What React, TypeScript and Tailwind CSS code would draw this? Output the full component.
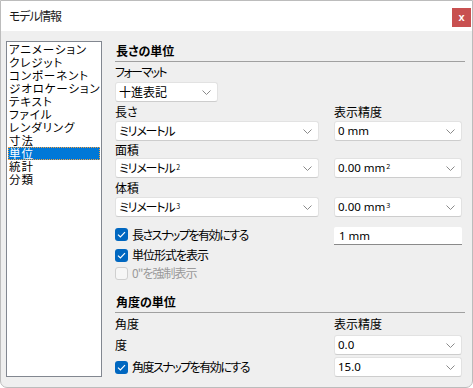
import React from "react";

const jp = "font-['Meiryo_UI','Noto_Sans_CJK_JP',sans-serif] [font-feature-settings:'palt']";
const lat = "font-['Noto_Sans',sans-serif] text-[11.5px]";

const Chevron = () => (
  <svg width="9" height="5" viewBox="0 0 9 5" className="shrink-0">
    <path d="M0.5 0.5 L4.5 4.5 L8.5 0.5" fill="none" stroke="#8a8a8a" strokeWidth="1" />
  </svg>
);

function Select({ cls, children }: { cls: string; children: React.ReactNode }) {
  return (
    <div
      className={`flex items-center justify-between h-[20px] bg-white border border-[#e2e2e2] border-b-[#cdcdcd] rounded-[3px] pl-[3px] pr-[6px] leading-none text-black ${cls}`}
    >
      <span className="whitespace-nowrap">{children}</span>
      <Chevron />
    </div>
  );
}

function Check({ checked, disabled, label, tr }: { checked?: boolean; disabled?: boolean; label: string; tr: string }) {
  return (
    <div className="flex items-center gap-[4px]">
      {checked ? (
        <div className="w-[13px] h-[13px] rounded-[3px] bg-[#0067c0] flex items-center justify-center shrink-0">
          <svg width="9" height="7" viewBox="0 0 9 7">
            <path d="M1 3.6 L3.4 6 L8 1.2" stroke="white" fill="none" strokeWidth="1.2" />
          </svg>
        </div>
      ) : (
        <div className="w-[13px] h-[13px] rounded-[3px] border border-[#cfcfcf] bg-[#f6f6f6] shrink-0" />
      )}
      <span className={`text-[12px] leading-none whitespace-nowrap ${tr} ${disabled ? "text-[#9a9a9a]" : "text-black"}`}>
        {label}
      </span>
    </div>
  );
}

const items = [
  "アニメーション",
  "クレジット",
  "コンポーネント",
  "ジオロケーション",
  "テキスト",
  "ファイル",
  "レンダリング",
  "寸法",
  "単位",
  "統計",
  "分類",
];

export default function App() {
  return (
    <div className={`w-[473px] h-[388px] border border-[#bcbcbc] rounded-b-[7px] bg-[#efefef] flex flex-col overflow-hidden ${jp}`}>
      {/* Title bar */}
      <div className="h-[30px] bg-white flex items-start justify-between pr-[1px] shrink-0">
        <span className="text-[12px] leading-[30px] text-[#1a1a1a] pl-[8px] tracking-[-1.2px]">モデル情報</span>
        <div className="w-[19px] h-[19px] bg-[#c85050] flex items-center justify-center mt-[7px]">
          <span className="text-white text-[11px] font-bold leading-none font-['Liberation_Sans',sans-serif]">x</span>
        </div>
      </div>

      {/* Body */}
      <div className="flex pt-[10px] pl-[5px]">
        {/* List */}
        <div className="w-[96px] h-[336px] bg-white border border-[#828790] p-[1px] shrink-0">
          {items.map((t) => (
            <div
              key={t}
              className={`h-[13px] pl-[1px] text-[11.5px] leading-[13px] tracking-[0.9px] whitespace-nowrap ${
                t === "単位"
                  ? "bg-[#0078d7] text-white outline outline-1 outline-dotted outline-[#f5a142] outline-offset-[-1px]"
                  : "text-black"
              }`}
            >
              {t}
            </div>
          ))}
        </div>

        {/* Right panel */}
        <div className="ml-[13px] w-[350px] flex flex-col text-[12px] text-black">
          <div className="h-[20px] flex items-center pl-[1px] text-[12px] font-bold leading-none">長さの単位</div>
          <div className="h-px bg-[#a0a0a0]" />
          <div className="h-[20px] flex items-center leading-none tracking-[-1.6px]">フォーマット</div>
          <div className="h-[20px] flex">
            <Select cls="w-[103px] text-[12px]">十進表記</Select>
          </div>

          <div className="grid grid-cols-[204px_128px] gap-x-[15px]">
            <div className="h-[19px] flex items-center leading-none">長さ</div>
            <div className="h-[19px] flex items-center leading-none">表示精度</div>
            <Select cls="w-[204px] text-[12px] tracking-[-1.2px]">ミリメートル</Select>
            <Select cls={`w-[128px] ${lat}`}>0 mm</Select>

            <div className="h-[17px] flex items-center leading-none">面積</div>
            <div className="h-[17px]" />
            <Select cls="w-[204px] text-[12px] tracking-[-1.2px]">
              ミリメートル<sup className="text-[7px] ml-[2px]">2</sup>
            </Select>
            <Select cls={`w-[128px] ${lat}`}>
              0.00 mm<sup className="text-[7px] ml-[1px]">2</sup>
            </Select>

            <div className="h-[19px] flex items-center leading-none">体積</div>
            <div className="h-[19px]" />
            <Select cls="w-[204px] text-[12px] tracking-[-1.2px]">
              ミリメートル<sup className="text-[7px] ml-[2px]">3</sup>
            </Select>
            <Select cls={`w-[128px] ${lat}`}>
              0.00 mm<sup className="text-[7px] ml-[1px]">3</sup>
            </Select>

            <div className="h-[10px]" />
            <div className="h-[10px]" />

            <div className="h-[18px] flex items-start pt-[1px]">
              <Check checked label="長さスナップを有効にする" tr="tracking-[-1.5px]" />
            </div>
            <div className={`h-[18px] bg-white border-b border-[#8a8a8a] rounded-t-[2px] flex items-center pl-[5px] leading-none ${lat}`}>
              1 mm
            </div>

            <div className="h-[18px] flex items-center pt-[2px]">
              <Check checked label="単位形式を表示" tr="tracking-[-1px]" />
            </div>
            <div className="h-[18px]" />

            <div className="h-[20px] flex items-center">
              <Check disabled label={'0"を強制表示'} tr="tracking-[-1px]" />
            </div>
            <div className="h-[20px]" />
          </div>

          <div className="h-[9px]" />
          <div className="h-[20px] flex items-center pl-[1px] text-[12px] font-bold leading-none">角度の単位</div>
          <div className="h-px bg-[#a0a0a0]" />

          <div className="grid grid-cols-[204px_128px] gap-x-[15px]">
            <div className="h-[21px] flex items-center leading-none">角度</div>
            <div className="h-[21px] flex items-center leading-none">表示精度</div>

            <div className="h-[21px] pt-[1px] flex items-center leading-none">度</div>
            <div className="h-[21px] pt-[1px]">
              <Select cls={`w-[128px] ${lat}`}>0.0</Select>
            </div>

            <div className="h-[22px] pt-[2px] flex items-center">
              <Check checked label="角度スナップを有効にする" tr="tracking-[-1.5px]" />
            </div>
            <div className="h-[22px] pt-[2px]">
              <Select cls={`w-[128px] ${lat}`}>15.0</Select>
            </div>
          </div>
        </div>
      </div>
    </div>
  );
}
